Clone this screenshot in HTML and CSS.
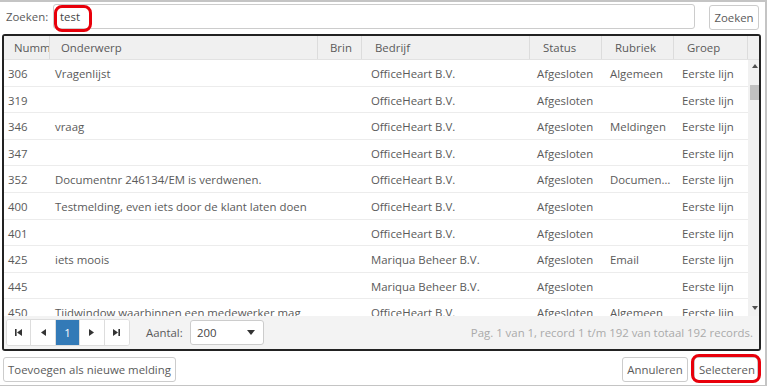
FILE: index.html
```html
<!DOCTYPE html>
<html lang="nl">
<head>
<meta charset="UTF-8">
<title>Melding zoeken</title>
<link rel="stylesheet" href="styles.css">
</head>
<body>
<div class="dialog">
    <!-- zoekbalk -->
    <div class="search-row">
        <label class="search-label">Zoeken:</label>
        <div class="search-input">test</div>
        <button class="btn btn-search">Zoeken</button>
        <span class="mark mark-test"></span>
    </div>

    <!-- grid -->
    <div class="grid">
        <div class="grid-head">
            <div class="cols">
                <div class="th c-nr">Nummer</div>
                <div class="th c-sub">Onderwerp</div>
                <div class="th c-brin">Brin</div>
                <div class="th c-comp">Bedrijf</div>
                <div class="th c-stat">Status</div>
                <div class="th c-rub">Rubriek</div>
                <div class="th c-grp">Groep</div>
            </div>
            <div class="th-spacer"></div>
        </div>

        <div class="grid-body">
            <div class="rows" id="rows"></div>
            <div class="scrollbar">
                <span class="sb-up"></span>
                <span class="sb-thumb"></span>
                <span class="sb-down"></span>
            </div>
        </div>

        <div class="pager">
            <div class="pager-buttons">
                <button class="pg">
                    <svg width="7" height="7" viewBox="0 0 7 7"><rect x="0" y="0" width="1.6" height="7" fill="#333"/><path d="M7 0 L2 3.5 L7 7 Z" fill="#333"/></svg>
                </button>
                <button class="pg">
                    <svg width="5" height="7" viewBox="0 0 5 7"><path d="M5 0 L0 3.5 L5 7 Z" fill="#333"/></svg>
                </button>
                <button class="pg pg-active">1</button>
                <button class="pg">
                    <svg width="5" height="7" viewBox="0 0 5 7"><path d="M0 0 L5 3.5 L0 7 Z" fill="#333"/></svg>
                </button>
                <button class="pg">
                    <svg width="7" height="7" viewBox="0 0 7 7"><path d="M0 0 L5 3.5 L0 7 Z" fill="#333"/><rect x="5.4" y="0" width="1.6" height="7" fill="#333"/></svg>
                </button>
            </div>
            <span class="pager-label">Aantal:</span>
            <div class="select">
                <span>200</span>
                <svg width="8" height="5" viewBox="0 0 8 5"><path d="M0 0 L8 0 L4 5 Z" fill="#333"/></svg>
            </div>
            <span class="pager-info">Pag. 1 van 1, record 1 t/m 192 van totaal 192 records.</span>
        </div>
    </div>

    <!-- knoppen -->
    <div class="footer">
        <button class="btn btn-add">Toevoegen als nieuwe melding</button>
        <div class="footer-right">
            <button class="btn btn-cancel">Annuleren</button>
            <button class="btn btn-select">Selecteren</button>
            <span class="mark mark-select"></span>
        </div>
    </div>
</div>

<script>
const meldingen = [
    ['306', 'Vragenlijst', '', 'OfficeHeart B.V.', 'Afgesloten', 'Algemeen', 'Eerste lijn'],
    ['319', '', '', 'OfficeHeart B.V.', 'Afgesloten', '', 'Eerste lijn'],
    ['346', 'vraag', '', 'OfficeHeart B.V.', 'Afgesloten', 'Meldingen', 'Eerste lijn'],
    ['347', '', '', 'OfficeHeart B.V.', 'Afgesloten', '', 'Eerste lijn'],
    ['352', 'Documentnr 246134/EM is verdwenen.', '', 'OfficeHeart B.V.', 'Afgesloten', 'Documentatie', 'Eerste lijn'],
    ['400', 'Testmelding, even iets door de klant laten doen', '', 'OfficeHeart B.V.', 'Afgesloten', '', 'Eerste lijn'],
    ['401', '', '', 'OfficeHeart B.V.', 'Afgesloten', '', 'Eerste lijn'],
    ['425', 'iets moois', '', 'Mariqua Beheer B.V.', 'Afgesloten', 'Email', 'Eerste lijn'],
    ['445', '', '', 'Mariqua Beheer B.V.', 'Afgesloten', '', 'Eerste lijn'],
    ['450', 'Tijdwindow waarbinnen een medewerker mag', '', 'OfficeHeart B.V.', 'Afgesloten', 'Algemeen', 'Eerste lijn']
];
const classes = ['c-nr', 'c-sub', 'c-brin', 'c-comp', 'c-stat', 'c-rub', 'c-grp'];

const rows = document.getElementById('rows');
meldingen.forEach(m => {
    const row = document.createElement('div');
    row.className = 'cols row';
    m.forEach((val, i) => {
        const td = document.createElement('div');
        td.className = 'td ' + classes[i];
        td.textContent = val;
        row.appendChild(td);
    });
    rows.appendChild(row);
});
</script>
</body>
</html>
```

FILE: styles.css
```css
body {
    margin: 0;
    font-family: "Open Sans", "Liberation Sans", sans-serif;
    font-size: 11.4px;
    color: #5a5a5a;
    background: white;
}

.dialog {
    height: 383px;
    border-top: 2px solid #c4c4c4;
    border-right: 2px solid #c4c4c4;
    border-bottom: 1px solid #c4c4c4;
    margin-right: 1px;
    display: flex;
    flex-direction: column;
}

/* zoekbalk */
.search-row {
    position: relative;
    display: flex;
    align-items: center;
    height: 25px;
    padding: 2px 6px 0 6px;
}

.search-label {
    width: 47px;
}

.search-input {
    flex: 1;
    height: 23px;
    line-height: 23px;
    border: 1px solid #ccc;
    border-radius: 3px;
    padding-left: 6px;
    color: #444;
}

.btn {
    font-family: inherit;
    font-size: 11.4px;
    color: #5a5a5a;
    background: white;
    border: 1px solid #ccc;
    border-radius: 3px;
    height: 25px;
    padding: 0 4px;
    white-space: nowrap;
}

.btn-search {
    margin-left: 14px;
    width: 50px;
    margin-top: 2px;
}

.mark {
    position: absolute;
    border: 3px solid #e8000b;
    border-radius: 8px;
    pointer-events: none;
}

.mark-test {
    left: 54px;
    top: 3px;
    width: 32px;
    height: 21px;
}

.mark-select {
    right: -3px;
    top: -3px;
    width: 64px;
    height: 23px;
}

/* grid */
.grid {
    margin: 5px 4px 0 2px;
    border: 2px solid #222;
    border-radius: 3px;
    display: flex;
    flex-direction: column;
    overflow: hidden;
}

.cols {
    display: grid;
    grid-template-columns: 46px 268px 44px 168px 72px 72px 74px;
}

.grid-head {
    display: flex;
    height: 23px;
    background: #f0f0f0;
    border-bottom: 1px solid #e2e2e2;
}

.th {
    line-height: 23px;
    padding-left: 10px;
    border-right: 1px solid #dcdcdc;
    white-space: nowrap;
    overflow: hidden;
}

.th.c-sub { padding-left: 11px; }
.th.c-brin { padding-left: 12px; }
.th.c-comp { padding-left: 13px; }
.th.c-stat { padding-left: 13px; }
.th.c-rub { padding-left: 13px; }
.th.c-grp { padding-left: 13px; }

.th-spacer {
    width: 14px;
}

.grid-body {
    display: flex;
    height: 256px;
    overflow: hidden;
}

.rows {
    flex: 1;
}

.row {
    height: 26.6px;
    border-bottom: 1px solid #ececec;
    box-sizing: border-box;
}

.td {
    line-height: 27px;
    padding-left: 6px;
    white-space: nowrap;
    overflow: hidden;
}

.td.c-nr { padding-left: 4px; }
.td.c-sub { padding-left: 5px; padding-right: 6px; }
.td.c-comp { padding-left: 9px; }
.td.c-stat { padding-left: 7px; }
.td.c-rub { padding-left: 8px; text-overflow: ellipsis; padding-right: 2px; }
.td.c-grp { padding-left: 8px; }

.scrollbar {
    position: relative;
    width: 14px;
    background: #f1f1f1;
}

.sb-up, .sb-down {
    position: absolute;
    left: 4px;
    width: 0;
    height: 0;
    border-left: 3px solid transparent;
    border-right: 3px solid transparent;
}

.sb-up {
    top: 4px;
    border-bottom: 4px solid #505050;
}

.sb-down {
    bottom: 6px;
    border-top: 4px solid #505050;
}

.sb-thumb {
    position: absolute;
    left: 2px;
    top: 25px;
    width: 11px;
    height: 15px;
    background: #c1c1c1;
}

/* pager */
.pager {
    display: flex;
    align-items: center;
    height: 33px;
    padding: 0 6px 0 2px;
    background: #f3f3f3;
}

.pager-buttons {
    display: flex;
    border: 1px solid #ddd;
    border-radius: 3px;
    background: white;
    height: 25px;
    overflow: hidden;
}

.pg {
    box-sizing: border-box;
    width: 24.4px;
    height: 25px;
    border: none;
    border-right: 1px solid #ddd;
    background: white;
    padding: 0;
    display: flex;
    align-items: center;
    justify-content: center;
    font-family: inherit;
    font-size: 11.4px;
}

.pg:last-child {
    border-right: none;
}

.pg-active {
    background: #337ab7;
    color: white;
}

.pager-label {
    margin-left: 16px;
    width: 44px;
}

.select {
    width: 74px;
    height: 25px;
    box-sizing: border-box;
    border: 1px solid #ccc;
    border-radius: 3px;
    background: white;
    display: flex;
    align-items: center;
    justify-content: space-between;
    padding: 0 8px 0 6px;
    color: #444;
}

.pager-info {
    margin-left: auto;
    color: #aaa;
}

/* knoppen */
.footer {
    display: flex;
    justify-content: space-between;
    align-items: center;
    padding: 6px 5px 0 3px;
}

.btn-add {
    width: 173px;
}

.btn-cancel {
    width: 66px;
}

.btn-select {
    width: 64px;
}

.footer-right {
    position: relative;
    display: flex;
    gap: 6px;
    margin-right: 2px;
}
```
